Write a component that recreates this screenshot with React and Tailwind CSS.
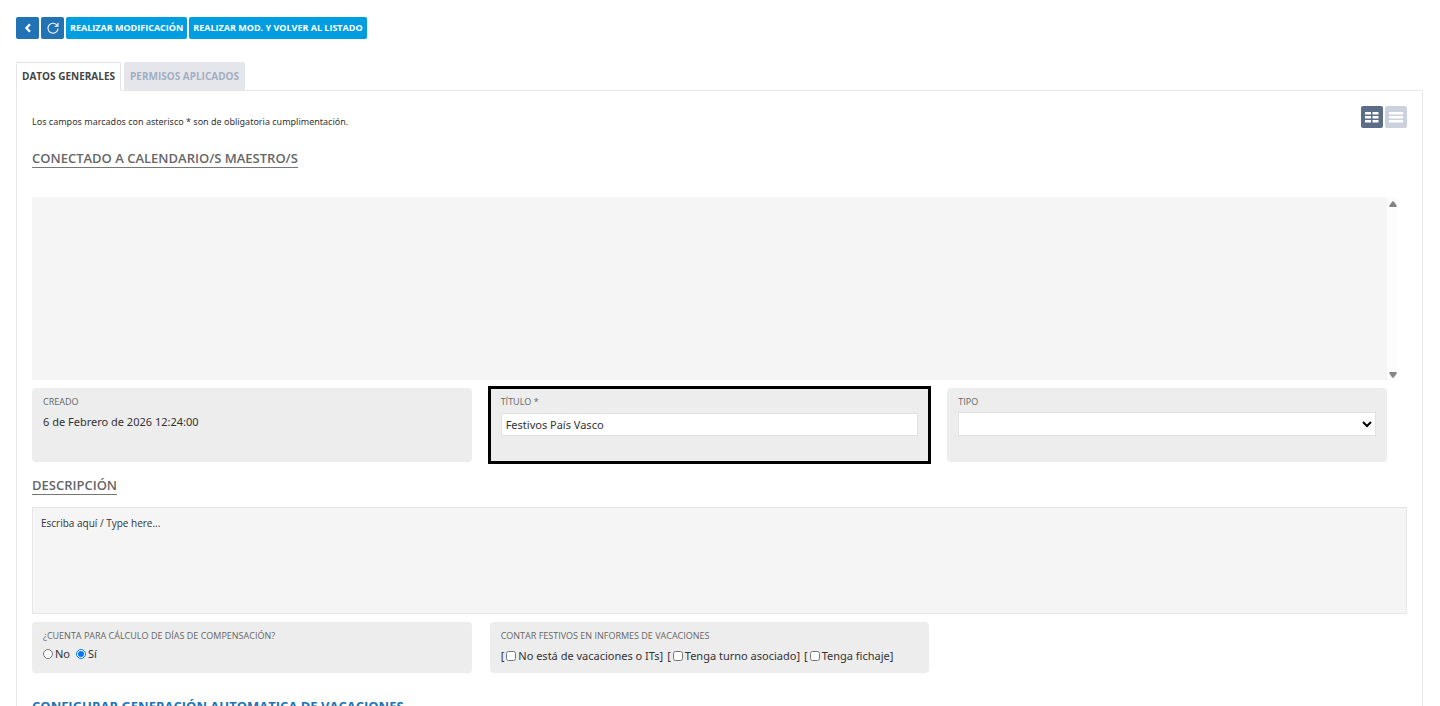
import React, { useState } from 'react';

const tabs = ['Datos generales', 'Permisos aplicados'];

const vacationOptions = [
    { id: 'no-vacaciones', label: 'No está de vacaciones o ITs' },
    { id: 'turno', label: 'Tenga turno asociado' },
    { id: 'fichaje', label: 'Tenga fichaje' },
];

const SectionTitle = ({ children }) => (
    <h2 className="w-fit border-b border-[#777] font-['Open_Sans',sans-serif] text-[13px] leading-[17px] font-semibold text-[#666] uppercase">
        {children}
    </h2>
);

const fieldLabel = "block font-['Open_Sans',sans-serif] text-[9px] leading-3 text-[#666] uppercase";
const card = 'rounded bg-[#ededed] px-[11px] pt-2';

// Narrow track with the two arrows beside the calendar list
const ScrollTrack = () => (
    <div className="flex w-[11px] flex-col items-center justify-between bg-[#fcfcfc] pt-1 pb-0.5">
        <svg width="8" height="6" viewBox="0 0 8 6" fill="#858585">
            <path d="M3.2 .5Q4 -.2 4.8 .5L7.8 4.7Q8 6 7 6H1Q0 6 .2 4.7Z" />
        </svg>
        <svg width="8" height="6" viewBox="0 0 8 6" fill="#858585">
            <path d="M3.2 5.5Q4 6.2 4.8 5.5L7.8 1.3Q8 0 7 0H1Q0 0 .2 1.3Z" />
        </svg>
    </div>
);

const App = () => {
    const [activeTab, setActiveTab] = useState(0);
    const [title, setTitle] = useState('Festivos País Vasco');
    const [counts, setCounts] = useState('si');
    const [twoColumns, setTwoColumns] = useState(true);

    return (
        <div className="bg-white pt-[17px] pr-[17px] pl-4 font-['Noto_Sans','Open_Sans',sans-serif] text-[11px] text-[#333]">
            {/* Toolbar */}
            <div className="flex gap-0.5 font-['Open_Sans',sans-serif] text-[9px] font-bold text-white">
                <button type="button" aria-label="Volver" className="flex h-[22px] w-[23px] items-center justify-center rounded-xs bg-[#2173b5]">
                    <svg width="8" height="10" viewBox="0 0 8 10" fill="none" stroke="currentColor" strokeWidth="2.2">
                        <path d="M6 1.2L2.4 5L6 8.8" />
                    </svg>
                </button>
                <button type="button" aria-label="Recargar" className="flex h-[22px] w-[23px] items-center justify-center rounded-xs bg-[#2173b5]">
                    <svg width="12" height="12" viewBox="0 0 12 12" fill="none" stroke="currentColor" strokeWidth="1.1">
                        <path d="M10.4 3.8A5 5 0 1 0 11 6.6M11 .8V4.2H7.6" />
                    </svg>
                </button>
                <button type="button" className="h-[22px] rounded-xs bg-[#009ee0] px-1 uppercase">Realizar modificación</button>
                <button type="button" className="h-[22px] rounded-xs bg-[#009ee0] px-1 uppercase">Realizar mod. y volver al listado</button>
            </div>

            {/* Tabs */}
            <div role="tablist" className="mt-[23px] flex gap-[3px] font-['Open_Sans',sans-serif]">
                {tabs.map((tab, index) => (
                    <button
                        key={tab}
                        type="button"
                        role="tab"
                        aria-selected={activeTab === index}
                        onClick={() => setActiveTab(index)}
                        className={`rounded-t-xs border px-[5px] text-[10px] font-bold uppercase ${
                            activeTab === index
                                ? 'z-10 -mb-px h-[29px] border-[#e4e4e8] border-b-white bg-white text-[#444]'
                                : 'h-7 border-[#e4e6ec] bg-[#e4e6ec] text-[#a3aec0]'
                        }`}
                    >
                        {tab}
                    </button>
                ))}
            </div>

            <main className="border border-[#e8e8e8] px-[15px] pt-[15px]">
                <div className="flex justify-between">
                    <p className="mt-2 text-[9px] leading-4">Los campos marcados con asterisco * son de obligatoria cumplimentación.</p>
                    <div className="flex gap-0.5 text-white">
                        <button
                            type="button"
                            aria-label="Vista en columnas"
                            onClick={() => setTwoColumns(true)}
                            className={`flex size-[22px] items-center justify-center rounded-xs ${twoColumns ? 'bg-[#5b6d87]' : 'bg-[#cbd2de]'}`}
                        >
                            <svg width="14" height="12" viewBox="0 0 14 12" fill="currentColor">
                                <path d="M0 1h6v2.5H0zM7.5 1h6v2.5h-6zM0 5h6v2.5H0zM7.5 5h6v2.5h-6zM0 9h6v2.5H0zM7.5 9h6v2.5h-6z" />
                            </svg>
                        </button>
                        <button
                            type="button"
                            aria-label="Vista en lista"
                            onClick={() => setTwoColumns(false)}
                            className={`flex size-[22px] items-center justify-center rounded-xs ${twoColumns ? 'bg-[#cbd2de]' : 'bg-[#5b6d87]'}`}
                        >
                            <svg width="14" height="12" viewBox="0 0 14 12" fill="currentColor">
                                <path d="M0 1h14v2.5H0zM0 5h14v2.5H0zM0 9h14v2.5H0z" />
                            </svg>
                        </button>
                    </div>
                </div>

                <div className="mt-5">
                    <SectionTitle>Conectado a calendario/s maestro/s</SectionTitle>
                </div>

                <div className="mt-[29px] mr-[9px] flex h-[183px]">
                    <div className="grow bg-[#f5f5f5]" />
                    <ScrollTrack />
                </div>

                <div className="mt-2 mr-5 grid grid-cols-3 gap-[18px]">
                    <div className={`${card} h-[74px]`}>
                        <span className={fieldLabel}>Creado</span>
                        <p className="mt-1.5 leading-4">6 de Febrero de 2026 12:24:00</p>
                    </div>
                    <div className={`${card} h-[74px] rounded-none outline-3 -outline-offset-1 outline-black`}>
                        <label htmlFor="titulo" className={fieldLabel}>Título *</label>
                        <input
                            id="titulo"
                            type="text"
                            value={title}
                            onChange={(e) => setTitle(e.target.value)}
                            className="mt-[5px] block h-[23px] w-full border border-[#e2e2e2] bg-white px-1"
                        />
                    </div>
                    <div className={`${card} h-[74px]`}>
                        <label htmlFor="tipo" className={fieldLabel}>Tipo</label>
                        <select id="tipo" className="mt-1 block h-6 w-full border border-[#e2e2e2] bg-white text-black">
                            <option value=""></option>
                        </select>
                    </div>
                </div>

                <div className="mt-[15px]">
                    <SectionTitle>Descripción</SectionTitle>
                </div>
                <textarea
                    aria-label="Descripción"
                    defaultValue="Escriba aquí / Type here..."
                    className="mt-3 block h-[107px] w-full resize-none border border-[#e6e6e6] bg-[#f5f5f5] px-2 py-[7px] font-['Open_Sans',sans-serif] text-[10px] leading-4"
                />

                <div className="mt-2 mr-5 grid grid-cols-3 gap-[18px]">
                    <fieldset className={`${card} h-[51px]`}>
                        <legend className={`${fieldLabel} float-left w-full`}>¿Cuenta para cálculo de días de compensación?</legend>
                        <div className="clear-both flex gap-1.5 pt-1">
                            <label className="flex items-center gap-0.5 leading-4">
                                <input type="radio" name="cuenta" className="size-2.5" checked={counts === 'no'} onChange={() => setCounts('no')} />
                                No
                            </label>
                            <label className="flex items-center gap-0.5 leading-4">
                                <input type="radio" name="cuenta" className="size-2.5" checked={counts === 'si'} onChange={() => setCounts('si')} />
                                Sí
                            </label>
                        </div>
                    </fieldset>
                    <fieldset className={`${card} h-[51px]`}>
                        <legend className={`${fieldLabel} float-left w-full`}>Contar festivos en informes de vacaciones</legend>
                        <div className="clear-both flex gap-1 pt-1.5">
                            {vacationOptions.map((option) => (
                                <span key={option.id} className="flex items-center leading-4">
                                    [
                                    <input id={option.id} type="checkbox" className="mr-0.5 ml-0.5 size-2.5" />
                                    <label htmlFor={option.id}>{option.label}</label>
                                    ]
                                </span>
                            ))}
                        </div>
                    </fieldset>
                </div>

                <h2 className="mt-[23px] pb-4 font-['Open_Sans',sans-serif] text-[13px] leading-5 font-bold text-[#2173b5] uppercase">
                    Configurar generación automatica de vacaciones
                </h2>
            </main>
        </div>
    );
};

export default App;
